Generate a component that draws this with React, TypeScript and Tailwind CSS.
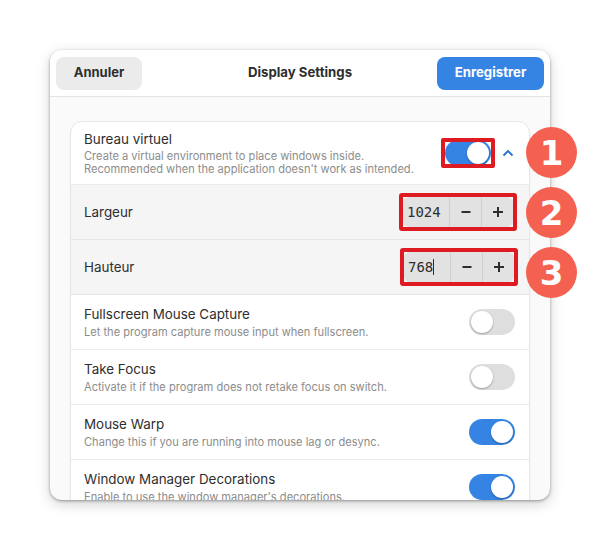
import React from "react";

function Toggle({ on }: { on: boolean }) {
  return (
    <div
      className={
        "relative w-[46px] h-[26px] rounded-full shrink-0 " +
        (on ? "bg-[#3584e4]" : "bg-[#dedede]")
      }
    >
      <div
        className={
          "absolute top-[2px] w-[22px] h-[22px] rounded-full bg-white shadow-[0_1px_2px_rgba(0,0,0,0.3)] " +
          (on ? "left-[22px]" : "left-[2px]")
        }
      />
    </div>
  );
}

function Spin({ value, cursor }: { value: string; cursor?: boolean }) {
  return (
    <div className="relative flex h-[30px] w-[110px] rounded-[6px] bg-[#e2e2e2] text-[#2e2e2e]">
      <div className="flex w-[46px] items-center pl-[4px] font-['DejaVu_Sans_Mono',monospace] text-[14px]">
        {value}
        {cursor && <span className="inline-block h-[16px] w-[1px] bg-[#2e2e2e]" />}
      </div>
      <div className="flex w-[32px] items-center justify-center border-l border-[#d0d0d0]">
        <svg width="12" height="12" viewBox="0 0 12 12">
          <path d="M1.5 6h9" stroke="#2e2e2e" strokeWidth="2" />
        </svg>
      </div>
      <div className="flex w-[32px] items-center justify-center border-l border-[#d0d0d0]">
        <svg width="12" height="12" viewBox="0 0 12 12">
          <path d="M1 6h10M6 1v10" stroke="#2e2e2e" strokeWidth="2" />
        </svg>
      </div>
      <div className="absolute -left-[4px] -right-[4px] -top-[4px] -bottom-[4px] rounded-[3px] border-[4px] border-[#de1a23]" />
    </div>
  );
}

function Badge({ n, top }: { n: string; top: string }) {
  return (
    <div
      className={
        "absolute left-[526px] flex h-[51px] w-[51px] items-center justify-center rounded-full bg-[#f46151] font-['DejaVu_Sans',sans-serif] text-[34px] font-bold leading-none text-white " +
        top
      }
    >
      {n}
    </div>
  );
}

function Row({
  title,
  sub,
  on,
  last,
}: {
  title: string;
  sub: string;
  on: boolean;
  last?: boolean;
}) {
  return (
    <div
      className={
        "flex h-[55px] items-center justify-between pl-[13px] pr-[14px] " +
        (last ? "" : "border-b border-[#ebebeb]")
      }
    >
      <div className="flex flex-col">
        <div className="text-[13.4px] leading-[18px] text-[#2e2e2e]">{title}</div>
        <div className="mt-[3px] text-[11.1px] leading-[13px] text-[#8c8c8c]">{sub}</div>
      </div>
      <Toggle on={on} />
    </div>
  );
}

export default function App() {
  return (
    <div className="relative h-[550px] w-[600px] bg-white font-['Inter',sans-serif]">
      <div className="absolute left-[50px] top-[50px] flex h-[450px] w-[500px] flex-col overflow-hidden rounded-[12px] bg-[#fafafa] shadow-[0_1px_3px_rgba(0,0,0,0.35),0_4px_14px_rgba(0,0,0,0.18)]">
        {/* header */}
        <div className="grid h-[47px] shrink-0 grid-cols-[1fr_auto_1fr] items-center border-b border-[#e3e3e3] bg-white px-[6px]">
          <div className="flex justify-start">
            <button className="h-[33px] w-[86px] rounded-[8px] bg-[#ebebeb] text-[13px] font-bold text-[#2e2e2e]">
              Annuler
            </button>
          </div>
          <div className="text-[13.2px] font-bold text-[#2e2e2e]">Display Settings</div>
          <div className="flex justify-end">
            <button className="h-[33px] w-[107px] rounded-[8px] bg-[#3584e4] text-[13.2px] font-bold text-white">
              Enregistrer
            </button>
          </div>
        </div>
        {/* content */}
        <div className="px-[20px] pt-[24px]">
          <div className="overflow-hidden rounded-[12px] border border-[#e6e6e6] bg-white shadow-[0_1px_2px_rgba(0,0,0,0.05)]">
            {/* Bureau virtuel */}
            <div className="flex h-[63px] items-center justify-between border-b border-[#ebebeb] pl-[13px] pr-[14px]">
              <div className="flex flex-col">
                <div className="text-[13.4px] leading-[18px] text-[#2e2e2e]">Bureau virtuel</div>
                <div className="mt-[2px] text-[11.1px] leading-[13px] text-[#8c8c8c]">
                  Create a virtual environment to place windows inside.
                  <br />
                  Recommended when the application doesn't work as intended.
                </div>
              </div>
              <div className="flex items-center">
                <div className="relative">
                  <Toggle on={true} />
                  <div className="absolute -left-[4px] -right-[4px] -top-[2px] -bottom-[2px] rounded-[2px] border-[4px] border-[#de1a23]" />
                </div>
                <svg className="ml-[10px]" width="14" height="14" viewBox="0 0 14 14">
                  <path d="M2.5 9.5L7 5l4.5 4.5" fill="none" stroke="#1c71d8" strokeWidth="1.8" />
                </svg>
              </div>
            </div>
            {/* Largeur */}
            <div className="flex h-[55px] items-center justify-between border-b border-[#e6e6e6] bg-[#f5f5f5] pl-[13px] pr-[16px]">
              <div className="text-[13.4px] text-[#2e2e2e]">Largeur</div>
              <Spin value="1024" />
            </div>
            {/* Hauteur */}
            <div className="flex h-[55px] items-center justify-between border-b border-[#e6e6e6] bg-[#f5f5f5] pl-[13px] pr-[15px]">
              <div className="text-[13.4px] text-[#2e2e2e]">Hauteur</div>
              <Spin value="768" cursor />
            </div>
            <Row
              title="Fullscreen Mouse Capture"
              sub="Let the program capture mouse input when fullscreen."
              on={false}
            />
            <Row
              title="Take Focus"
              sub="Activate it if the program does not retake focus on switch."
              on={false}
            />
            <Row
              title="Mouse Warp"
              sub="Change this if you are running into mouse lag or desync."
              on={true}
            />
            <Row
              title="Window Manager Decorations"
              sub="Enable to use the window manager's decorations."
              on={true}
            />
          </div>
        </div>
      </div>
      <Badge n="1" top="top-[127px]" />
      <Badge n="2" top="top-[187px]" />
      <Badge n="3" top="top-[247px]" />
    </div>
  );
}
